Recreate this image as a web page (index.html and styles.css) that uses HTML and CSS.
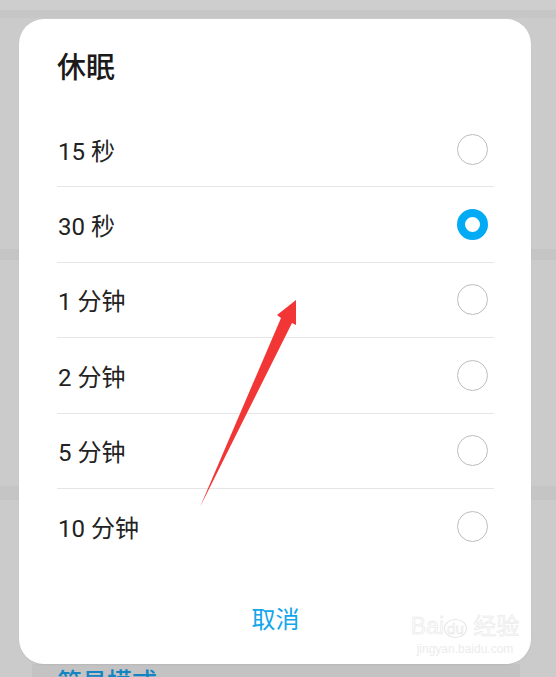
FILE: index.html
```html
<!DOCTYPE html>
<html>
<head>
<meta charset="utf-8">
<title>休眠</title>
<link rel="stylesheet" href="styles.css">
</head>
<body>
	<!-- 背景设置页 -->
	<div class="backdrop">
		<div class="band-top"></div>
		<div class="band-top2"></div>
		<div class="band band-a"></div>
		<div class="band band-b"></div>
		<div class="behind-card"><span>简易模式</span></div>
	</div>

	<!-- 弹窗 -->
	<section class="dialog">
		<h1 class="dialog-title">休眠</h1>
		<ul class="options">
			<li><span>15 秒</span><i class="radio"></i></li>
			<li><span>30 秒</span><i class="radio checked"></i></li>
			<li><span>1 分钟</span><i class="radio"></i></li>
			<li><span>2 分钟</span><i class="radio"></i></li>
			<li><span>5 分钟</span><i class="radio"></i></li>
			<li><span>10 分钟</span><i class="radio"></i></li>
		</ul>
		<div class="dialog-foot"><a href="#">取消</a></div>
	</section>

	<!-- 红色箭头标注 -->
	<svg class="arrow" width="556" height="677" viewBox="0 0 556 677">
		<polygon points="200,507 281,318 277,315 296,300 296,325 292,323" fill="#f23535"/>
	</svg>

	<div class="watermark">
		<span class="wm-big">Bai<b>du</b> 经验</span>
		<span class="wm-small">jingyan.baidu.com</span>
	</div>
</body>
</html>
```

FILE: styles.css
```css
body { margin: 0; padding: 0; background: #cbcbcb; width: 556px; height: 677px; overflow: hidden; position: relative; font-family: "Roboto", "Noto Sans CJK SC", sans-serif; }
ul { list-style: none; margin: 0; padding: 0; }
a { text-decoration: none; }

/* 背景 */
.backdrop { height: 677px; display: flex; flex-direction: column; }
.band-top { height: 10px; background: #cecece; }
.band-top2 { height: 8px; background: #c6c6c6; }
.band { background: #c5c5c5; }
.band-a { height: 11px; margin-top: 231px; }
.band-b { height: 14px; margin-top: 226px; }
.behind-card { margin: 164px 36px 0 32px; flex: 1; background: #c3c3c3; padding: 4px 0 0 25px; overflow: hidden; }
.behind-card span { font-size: 25px; line-height: 30px; color: #1584c2; font-weight: 500; }

/* 弹窗 */
.dialog { position: absolute; left: 19px; top: 19px; width: 512px; height: 645px; background: #fff; border-radius: 25px; box-shadow: 0 1px 2px rgba(0,0,0,0.06); display: flex; flex-direction: column; box-sizing: border-box; padding: 0 37px 0 38px; }
.dialog-title { margin: 0; padding-top: 31px; padding-bottom: 26px; font-size: 29px; line-height: 36px; font-weight: 500; color: #1a1a1a; }
.options li { height: 74.4px; display: flex; align-items: center; justify-content: space-between; border-bottom: 1px solid #e6e6e6; font-size: 24px; color: #222; }
.options li:last-child { border-bottom: none; }
.options span { padding-left: 1px; }
.radio { width: 29px; height: 29px; border: 1.5px solid #bdbdbd; border-radius: 50%; margin-right: 6px; box-sizing: content-box; }
.radio.checked { width: 15px; height: 15px; border: 8.5px solid #03aaf4; }
.dialog-foot { flex: 1; text-align: center; padding-top: 41px; }
.dialog-foot a { font-size: 24px; line-height: 32px; color: #13a6ea; }

.arrow { position: absolute; left: 0; top: 0; }

/* 水印 */
.watermark { position: absolute; left: 402px; top: 613px; width: 126px; text-align: center; font-family: "Liberation Sans", "Noto Sans CJK SC", sans-serif; }
.wm-big { display: block; font-size: 23px; line-height: 26px; -webkit-text-stroke: 0.5px #e6e6e6; color: #fbfbfb; }
.wm-big b { font-weight: 400; font-size: 15px; border: 1px solid #e6e6e6; border-radius: 50%; padding: 0 2px; }
.wm-small { display: block; font-size: 12px; line-height: 14px; color: #ececec; }
```
